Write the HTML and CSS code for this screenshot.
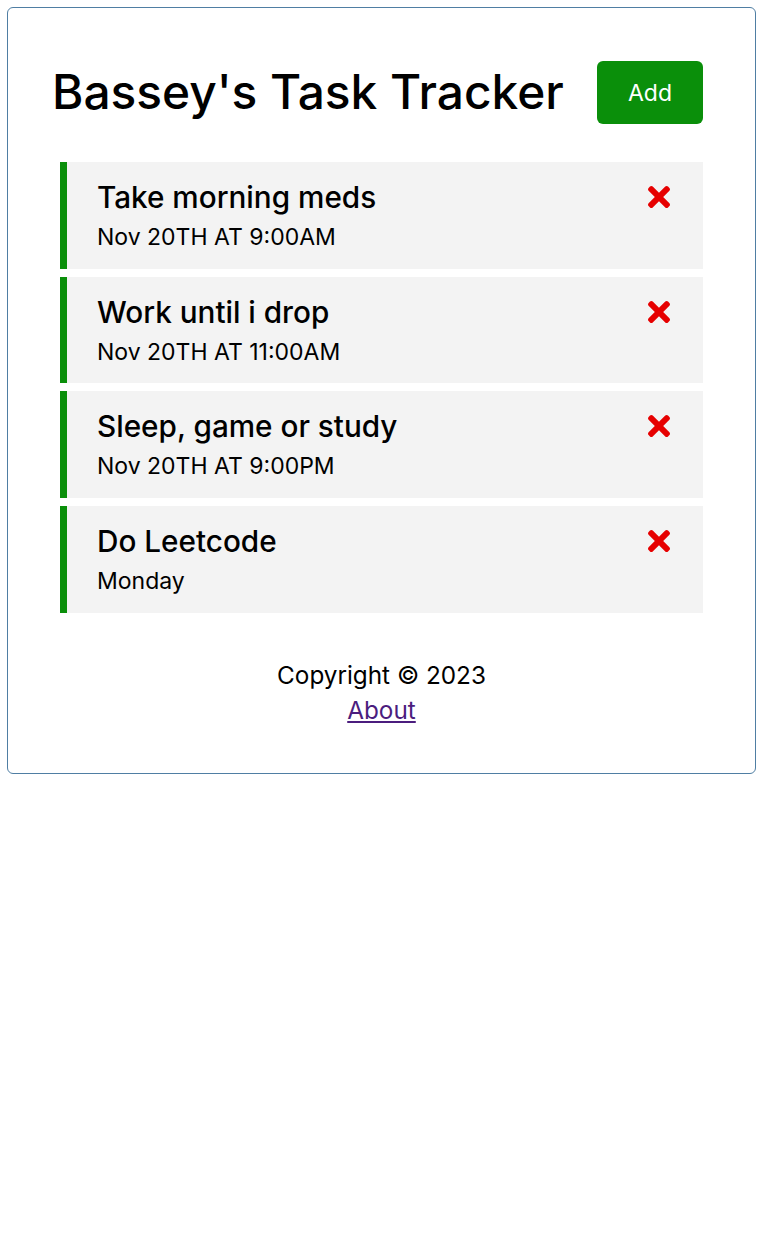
FILE: index.html
```html
<!DOCTYPE html>
<html lang="en">
<head>
<meta charset="utf-8">
<title>Task Tracker</title>
<link rel="stylesheet" href="styles.css">
</head>
<body>
<div class="container">
  <header class="header">
    <h1 class="title">Bassey's Task Tracker</h1>
    <button class="btn">Add</button>
  </header>
  <div class="tasks">
    <div class="task">
      <h3 class="task-title">Take morning meds <svg class="del" viewBox="0 80 352 352"><path d="M242.72 256l100.07-100.07c12.28-12.280 12.28-32.190 0-44.48l-22.24-22.24c-12.28-12.28-32.19-12.28-44.48 0L176 189.28 75.930 89.210c-12.28-12.28-32.19-12.28-44.48 0L9.210 111.450c-12.28 12.28-12.28 32.190 0 44.48L109.28 256 9.210 356.070c-12.28 12.28-12.28 32.190 0 44.48l22.24 22.240c12.28 12.28 32.200 12.28 44.48 0L176 322.720l100.070 100.070c12.28 12.28 32.200 12.28 44.48 0l22.24-22.240c12.28-12.28 12.28-32.190 0-44.48L242.72 256z"/></svg></h3>
      <p class="task-day">Nov 20TH AT 9:00AM</p>
    </div>
    <div class="task">
      <h3 class="task-title">Work until i drop <svg class="del" viewBox="0 80 352 352"><path d="M242.72 256l100.07-100.07c12.28-12.280 12.28-32.190 0-44.48l-22.24-22.24c-12.28-12.28-32.19-12.28-44.48 0L176 189.28 75.930 89.210c-12.28-12.28-32.19-12.28-44.48 0L9.210 111.450c-12.28 12.28-12.28 32.190 0 44.48L109.28 256 9.210 356.070c-12.28 12.28-12.28 32.190 0 44.48l22.24 22.240c12.28 12.28 32.200 12.28 44.48 0L176 322.720l100.070 100.070c12.28 12.28 32.200 12.28 44.48 0l22.24-22.240c12.28-12.28 12.28-32.190 0-44.48L242.72 256z"/></svg></h3>
      <p class="task-day">Nov 20TH AT 11:00AM</p>
    </div>
    <div class="task">
      <h3 class="task-title">Sleep, game or study <svg class="del" viewBox="0 80 352 352"><path d="M242.72 256l100.07-100.07c12.28-12.280 12.28-32.190 0-44.48l-22.24-22.24c-12.28-12.28-32.19-12.28-44.48 0L176 189.28 75.930 89.210c-12.28-12.28-32.19-12.28-44.48 0L9.210 111.450c-12.28 12.28-12.28 32.190 0 44.48L109.28 256 9.210 356.070c-12.28 12.28-12.28 32.190 0 44.48l22.24 22.240c12.28 12.28 32.200 12.28 44.48 0L176 322.720l100.070 100.070c12.28 12.28 32.200 12.28 44.48 0l22.24-22.240c12.28-12.28 12.28-32.190 0-44.48L242.72 256z"/></svg></h3>
      <p class="task-day">Nov 20TH AT 9:00PM</p>
    </div>
    <div class="task">
      <h3 class="task-title">Do Leetcode <svg class="del" viewBox="0 80 352 352"><path d="M242.72 256l100.07-100.07c12.28-12.280 12.28-32.190 0-44.48l-22.24-22.24c-12.28-12.28-32.19-12.28-44.48 0L176 189.28 75.930 89.210c-12.28-12.28-32.19-12.28-44.48 0L9.210 111.450c-12.28 12.28-12.28 32.190 0 44.48L109.28 256 9.210 356.070c-12.28 12.28-12.28 32.190 0 44.48l22.24 22.240c12.28 12.28 32.200 12.28 44.48 0L176 322.720l100.070 100.070c12.28 12.28 32.200 12.28 44.48 0l22.24-22.240c12.28-12.28 12.28-32.190 0-44.48L242.72 256z"/></svg></h3>
      <p class="task-day">Monday</p>
    </div>
  </div>
  <footer class="footer">
    <p class="copy">Copyright © 2023</p>
    <a class="about" href="#about">About</a>
  </footer>
</div>
</body>
</html>
```

FILE: styles.css
```css
* { box-sizing: border-box; }
body {
  margin: 0;
  background: #fff;
  font-family: Inter, "Open Sans", sans-serif;
  color: #000;
}
.container {
  width: 749px;
  height: 767px;
  margin: 7px 0 0 7px;
  border: 1px solid #4f7ea3;
  border-radius: 6px;
  padding: 53px 52px 0 44px;
}
.header {
  display: flex;
  justify-content: space-between;
  align-items: center;
  height: 63px;
  margin-bottom: 38px;
}
.title {
  margin: 0;
  font-size: 47.8px;
  font-weight: 500;
  line-height: 1;
}
.btn {
  width: 106px;
  height: 63px;
  border: 0;
  border-radius: 6px;
  background: #0a8f0a;
  color: #fff;
  font-family: inherit;
  font-size: 23px;
  padding: 0;
}
.tasks {
  display: flex;
  flex-direction: column;
  gap: 8px;
  margin-left: 8px;
}
.task {
  height: 106.67px;
  background: #f3f3f3;
  border-left: 7px solid #0a8f0a;
  padding: 17px 33px 0 30px;
}
.task-title {
  display: flex;
  justify-content: space-between;
  align-items: center;
  margin: 0;
  font-size: 29.7px;
  font-weight: 500;
  line-height: 36px;
}
.del { width: 22px; height: 22px; fill: #e60000; }
.task-day {
  margin: 4px 0 0;
  font-size: 23px;
  line-height: 36px;
}
.footer {
  text-align: center;
  margin: 45px -52px 0 -44px;
  font-size: 24.3px;
  line-height: 35px;
}
.copy { margin: 0; }
.about { color: #4b1d7e; }
```
